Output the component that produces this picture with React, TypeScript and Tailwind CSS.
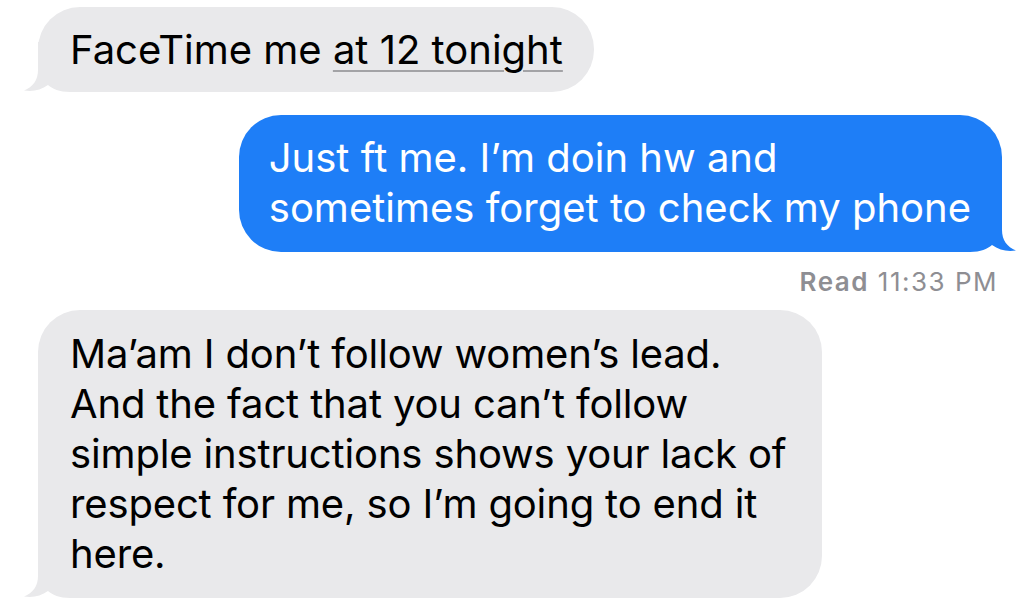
import React from 'react';

const FONT = { fontFamily: 'Inter, "Liberation Sans", Arial, sans-serif' };

// iOS-style tail, drawn at the bottom corner of a bubble
const Tail = ({ side, color }: { side: 'left' | 'right'; color: string }) => (
  <svg
    width="60"
    height="50"
    viewBox="0 0 60 50"
    className={
      side === 'left'
        ? 'absolute bottom-0 left-[-16px]'
        : 'absolute bottom-0 right-[-16px] -scale-x-100'
    }
  >
    <path
      d="M16,0 L16,28 C16,38 11,45 2,48.5 C11,50 19,48 26,43 C31,47 37,50 48,50 L60,50 L60,0 Z"
      fill={color}
    />
  </svg>
);

const Bubble = ({
  side,
  children,
  className,
}: {
  side: 'left' | 'right';
  children: React.ReactNode;
  className?: string;
}) => {
  const color = side === 'left' ? '#e9e9eb' : '#1e7ef7';
  return (
    <div
      className={`relative rounded-[42px] ${
        side === 'left' ? 'self-start bg-[#e9e9eb] text-black' : 'self-end bg-[#1e7ef7] text-white'
      } ${className ?? ''}`}
    >
      <Tail side={side} color={color} />
      <div className="relative whitespace-nowrap text-[40px] leading-[50px]">
        {children}
      </div>
    </div>
  );
};

export default function App() {
  return (
    <div className="min-h-[615px] w-[1024px] overflow-hidden bg-white" style={FONT}>
      <div className="flex flex-col pl-[38px] pr-[22px] pt-[7px]">
        <Bubble side="left" className="pl-[32px] pr-[31px] pt-[18px] pb-[17px]">
          FaceTime me{' '}
          <span className="underline decoration-[#a3a3a6] decoration-2 underline-offset-[6px]">
            at 12 tonight
          </span>
        </Bubble>

        <Bubble side="right" className="mt-[23px] pl-[30px] pr-[31px] pt-[18px] pb-[19px]">
          Just ft me. I’m doin hw and
          <br />
          sometimes forget to check my phone
        </Bubble>

        <div className="mr-[4px] mt-[15px] self-end text-[26px] leading-[30px] tracking-[1.5px] text-[#8e8e93]">
          <span className="font-semibold">Read</span> 11:33 PM
        </div>

        <Bubble side="left" className="mt-[13px] w-[784px] pl-[32px] pr-[32px] pt-[19px] pb-[19px] rounded-[40px]">
          <div className="tracking-[-0.15px]">
            Ma’am I don’t follow women’s lead.
            <br />
            And the fact that you can’t follow
            <br />
            simple instructions shows your lack of
            <br />
            respect for me, so I’m going to end it
            <br />
            here.
          </div>
        </Bubble>
      </div>
    </div>
  );
}
